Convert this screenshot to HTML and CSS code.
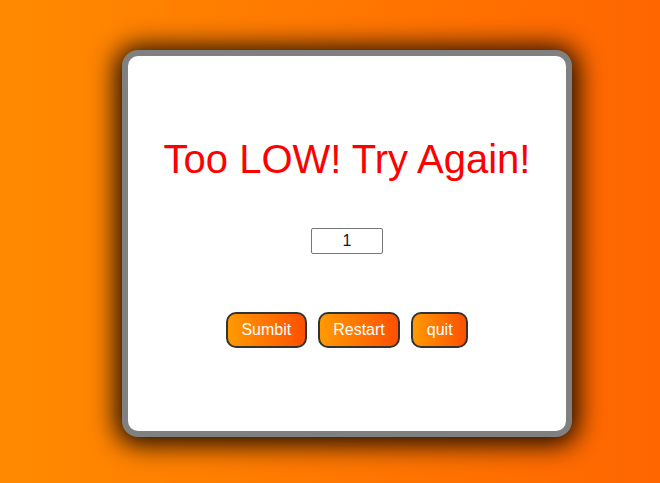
FILE: index.html
```html
<!DOCTYPE html>
<html>
<head>
<meta charset="utf-8">
<link rel="stylesheet" href="styles.css">
</head>
<body>
<div class="card">
  <h1 class="message">Too LOW! Try Again!</h1>
  <input class="guess" type="text" value="1">
  <div class="actions">
    <button class="btn">Sumbit</button>
    <button class="btn">Restart</button>
    <button class="btn">quit</button>
  </div>
</div>
</body>
</html>
```
FILE: styles.css
```css
html, body {
  margin: 0;
  height: 100%;
}
body {
  background: linear-gradient(to right, #ff8a00, #ff6600);
  font-family: "Liberation Sans", Arial, sans-serif;
  padding: 50px 0 0 122px;
  box-sizing: border-box;
  overflow: hidden;
}
.card {
  width: 450px;
  height: 387px;
  box-sizing: border-box;
  background: #fff;
  border: 6px solid #808080;
  border-radius: 16px;
  box-shadow: 0 2px 26px 6px rgba(0, 0, 0, 0.9);
  display: flex;
  flex-direction: column;
  align-items: center;
  padding-top: 80px;
}
.message {
  margin: 0;
  font-size: 40px;
  font-weight: normal;
  color: #ff0000;
  line-height: 46px;
}
.guess {
  margin-top: 46px;
  width: 72px;
  height: 26px;
  box-sizing: border-box;
  border: 1px solid #767676;
  border-radius: 2px;
  text-align: center;
  font-family: "Liberation Sans", Arial, sans-serif;
  font-size: 16px;
  color: #0a1a2a;
  padding: 0;
}
.actions {
  margin-top: 58px;
  display: flex;
  gap: 11px;
}
.btn {
  height: 36px;
  padding: 0 13.5px;
  border: 2px solid #333;
  border-radius: 10px;
  background: linear-gradient(to right, #ff9a00, #ff5000);
  color: #fff;
  font-family: "Liberation Sans", Arial, sans-serif;
  font-size: 16px;
}
```
